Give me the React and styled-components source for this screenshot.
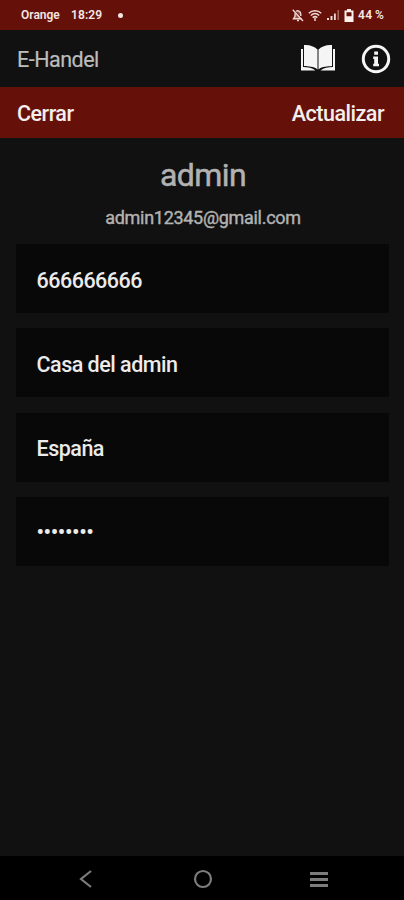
import React from "react";
import styled, { createGlobalStyle } from "styled-components";

const GlobalStyle = createGlobalStyle`
  * { box-sizing: border-box; }
  body { margin: 0; background: #111; font-family: Roboto, "Liberation Sans", sans-serif; }
`;

const Screen = styled.div`
  display: flex;
  flex-direction: column;
  height: 900px;
  width: 100%;
  background: #111111;
  overflow: hidden;
`;

const StatusBar = styled.div`
  display: flex;
  align-items: center;
  height: 30px;
  padding: 0 19px 0 21px;
  background: #65110a;
  color: #f6e6e2;
  font-size: 12px;
  font-weight: 600;
  line-height: 14px;
  white-space: nowrap;
`;

const Carrier = styled.span`
  width: 50px;
`;

const Clock = styled.span`
  width: 47px;
  letter-spacing: 0.1px;
`;

const Dot = styled.span`
  width: 5px;
  height: 5px;
  border-radius: 50%;
  background: #f6e6e2;
`;

const StatusIcons = styled.div`
  display: flex;
  align-items: center;
  margin-left: auto;
  gap: 4px;
`;

const Battery = styled.span`
  width: 27px;
  letter-spacing: 0.4px;
  word-spacing: -1px;
`;

const AppHeader = styled.header`
  display: flex;
  align-items: center;
  height: 57px;
  padding: 0 13px 0 17px;
`;

const AppTitle = styled.h1`
  margin: 0;
  padding-top: 2px;
  flex: 1;
  font-size: 21.5px;
  font-weight: 400;
  line-height: 26px;
  letter-spacing: -0.5px;
  color: #bcbcbc;
  -webkit-text-stroke: 0.2px;
`;

const HeaderIcons = styled.div`
  display: flex;
  align-items: center;
  gap: 25px;
`;

const ActionBar = styled.div`
  display: flex;
  justify-content: space-between;
  align-items: center;
  height: 51px;
  padding: 3px 20px 0 17px;
  background: #65110a;
`;

const Action = styled.button`
  padding: 0;
  border: 0;
  background: none;
  font: 500 21.5px/26px Roboto, "Liberation Sans", sans-serif;
  color: #f4eeec;
  letter-spacing: -0.5px;
`;

const Profile = styled.section`
  display: flex;
  flex-direction: column;
  align-items: center;
  height: 106px;
  padding: 18px 0 0 2px;
  color: #b2b2b2;
`;

const UserName = styled.h2`
  margin: 0;
  font-size: 32px;
  font-weight: 400;
  line-height: 38px;
  letter-spacing: -0.6px;
  -webkit-text-stroke: 0.5px;
`;

const Email = styled.p`
  margin: 13px 0 0;
  font-size: 18px;
  font-weight: 400;
  line-height: 22px;
  letter-spacing: -0.3px;
  -webkit-text-stroke: 0.4px;
`;

const FieldList = styled.main`
  display: flex;
  flex: 1;
  flex-direction: column;
  gap: 15.3px;
  padding: 0 15px 0 16px;
`;

const Field = styled.div`
  display: flex;
  align-items: center;
  height: 69px;
  padding: ${(p) => (p.$masked ? "3px" : "4px")} 20.5px 0;
  background: #080808;
  font-size: 21.5px;
  font-weight: 500;
  line-height: 26px;
  letter-spacing: ${(p) => (p.$masked ? "-0.4px" : "-0.5px")};
  color: #ebebeb;
`;

const NavBar = styled.nav`
  display: flex;
  align-items: center;
  justify-content: space-between;
  height: 44px;
  padding: 2px 75px 0 76px;
  background: #000;
`;

const MutedBell = () => (
  <svg width="12" height="13" viewBox="0 0 12 13" fill="none" stroke="#f0d8d2" strokeWidth="1.4">
    <path fill="#f0d8d2" fillOpacity=".35" d="M3 4.200v3.200L1.500 9.800h8M4.200 2.400C5 1.600 5.800 1.500 6.500 1.800 8 2.400 8.800 3.500 8.800 5v2" />
    <path d="M.8.8 11 12M5 11.500h2" />
  </svg>
);

const Wifi = () => (
  <svg width="14" height="13" viewBox="0 0 14 13" fill="none" stroke="#f0d8d2" strokeWidth="1.500">
    <path d="M.8 4.200C4.200.9 9.800.9 13.200 4.200M2.800 6.500c2.500-2.300 5.900-2.300 8.400 0M4.700 8.600c1.500-1.300 3.100-1.300 4.600 0M7 9v3" />
  </svg>
);

const Signal = () => (
  <svg width="14" height="12" viewBox="0 0 14 12" fill="#f0d8d2">
    <path d="M1 9h2v2H1zM4.500 7h2v4h-2zM8 4.500h1.800V11H8z" />
    <path d="M11.500 1h1.500v10h-1.500z" opacity=".45" />
  </svg>
);

const BatteryIcon = () => (
  <svg width="10" height="13" viewBox="0 0 10 13">
    <path fill="#fff0eb" fillRule="evenodd" d="M3 0h4v1.500h2.500V13h-9V1.500H3zM2.500 3.200v4h5v-4z" />
  </svg>
);

const Book = () => (
  <svg width="36" height="30" viewBox="0 0 36 30">
    <path fill="#f5f5f5" d="M4 1C9 .5 14 2 17.500 5.500v20C13.500 22 8.500 22.500 4 22zM32 1C27 .5 22 2 18.500 5.500v20C22.500 22 27.500 22.500 32 22z" />
    <path fill="#f5f5f5" d="M1 5h2v18c5 0 9 .5 12.500 3.500H1zM35 5h-2v18c-5 0-9 .5-12.500 3.500H35z" />
  </svg>
);

const Info = () => (
  <svg width="30" height="30" viewBox="0 0 30 30">
    <circle cx="15" cy="15" r="12.700" fill="none" stroke="#f5f5f5" strokeWidth="3" />
    <path fill="#f5f5f5" d="M13.200 7.500h3.800v3.300h-3.800zM12.200 12.500H17v7.300h1v2.400h-5.800v-2.400h1V15h-1z" />
  </svg>
);

const Back = () => (
  <svg width="20" height="20" viewBox="0 0 20 20" fill="none" stroke="#7c7c7c" strokeWidth="2.200">
    <path d="M15 2 5 10l10 8" />
  </svg>
);

const Home = () => (
  <svg width="20" height="20" viewBox="0 0 20 20" fill="none" stroke="#7c7c7c" strokeWidth="2.200">
    <circle cx="10" cy="10" r="8" />
  </svg>
);

const Recents = () => (
  <svg width="20" height="20" viewBox="0 0 20 20" fill="#7c7c7c">
    <path d="M1 3h18v3H1zM1 9h18v3H1zM1 15h18v3H1z" />
  </svg>
);

const fields = [
  { name: "phone", value: "666666666" },
  { name: "address", value: "Casa del admin" },
  { name: "country", value: "España" },
  { name: "password", value: "••••••••", masked: true },
];

export default function App() {
  return (
    <>
      <GlobalStyle />
      <Screen>
        <StatusBar>
          <Carrier>Orange</Carrier>
          <Clock>18:29</Clock>
          <Dot />
          <StatusIcons>
            <MutedBell />
            <Wifi />
            <Signal />
            <BatteryIcon />
            <Battery>44 %</Battery>
          </StatusIcons>
        </StatusBar>
        <AppHeader>
          <AppTitle>E-Handel</AppTitle>
          <HeaderIcons>
            <Book />
            <Info />
          </HeaderIcons>
        </AppHeader>
        <ActionBar>
          <Action>Cerrar</Action>
          <Action>Actualizar</Action>
        </ActionBar>
        <Profile>
          <UserName>admin</UserName>
          <Email>admin12345@gmail.com</Email>
        </Profile>
        <FieldList>
          {fields.map((field) => (
            <Field key={field.name} $masked={field.masked}>{field.value}</Field>
          ))}
        </FieldList>
        <NavBar>
          <Back />
          <Home />
          <Recents />
        </NavBar>
      </Screen>
    </>
  );
}
